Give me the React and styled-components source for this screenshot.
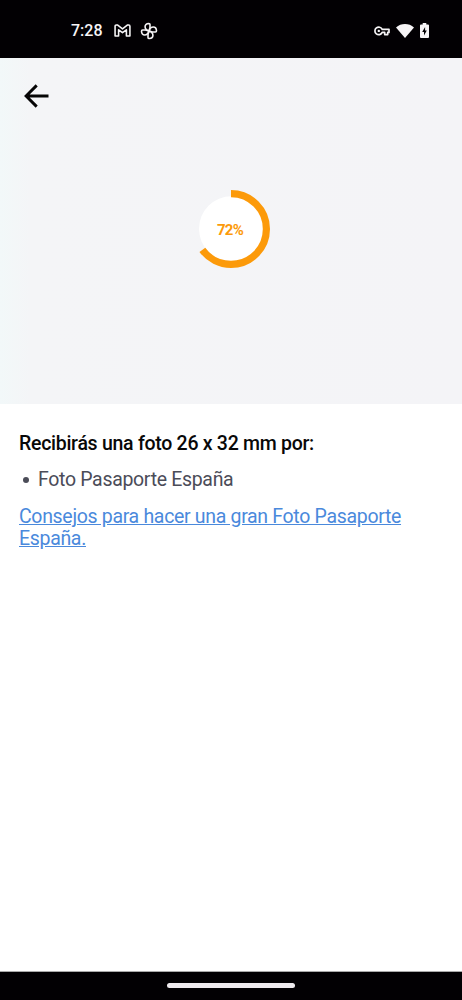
import React from "react";
import styled, { createGlobalStyle } from "styled-components";

const GlobalStyle = createGlobalStyle`
  body {
    margin: 0;
    background: #fff;
    font-family: Roboto, "Liberation Sans", sans-serif;
  }
`;

const Screen = styled.div`
  display: flex;
  flex-direction: column;
  width: 462px;
  height: 1000px;
  overflow: hidden;
`;

const StatusBar = styled.header`
  display: flex;
  justify-content: space-between;
  box-sizing: border-box;
  height: 58px;
  padding: 3px 33px 0 71px;
  background: #020003;
  color: #f6f4f6;
`;

const StatusGroup = styled.div`
  display: flex;
  align-items: center;
  gap: ${({ $gap }) => $gap}px;
`;

const Clock = styled.span`
  width: 32px;
  margin-right: 2px;
  font-size: 16px;
  font-weight: 500;
  white-space: nowrap;
`;

const Preview = styled.section`
  display: flex;
  flex-direction: column;
  align-items: center;
  height: 346px;
  background: linear-gradient(90deg, #f2f8f9 0, #f4f5f7 30px, #f4f4f7 100%);
`;

const BackButton = styled.button`
  display: flex;
  align-self: flex-start;
  margin: 26px 0 0 24px;
  padding: 0;
  border: 0;
  background: none;
  color: #050505;
`;

const Progress = styled.div`
  display: grid;
  place-items: center;
  margin-top: 82px;

  > * {
    grid-area: 1 / 1;
  }
`;

const Percent = styled.span`
  margin: 2px 2px 0 0;
  color: #fc9a0a;
  font-size: 15px;
  font-weight: 700;
  letter-spacing: -0.7px;
`;

const Details = styled.main`
  flex: 1;
  padding: 29px 19px 0;
  font-size: 19.5px;
  line-height: 22px;
  letter-spacing: -0.32px;
`;

const Heading = styled.h1`
  margin: 0;
  color: #080808;
  font-size: 19.5px;
  font-weight: 500;
  letter-spacing: -0.28px;
`;

const PhotoList = styled.ul`
  margin: 14px 0 15px;
  padding: 0;
  list-style: none;
`;

const PhotoItem = styled.li`
  display: flex;
  align-items: center;
  color: #4b4c58;

  &::before {
    content: "";
    width: 6px;
    height: 6px;
    margin: 0 9px 0 4px;
    border-radius: 50%;
    background: currentColor;
  }
`;

const TipsLink = styled.a`
  display: block;
  color: #4a89dc;
  text-decoration: underline;
`;

const NavigationBar = styled.footer`
  display: flex;
  justify-content: center;
  box-sizing: border-box;
  height: 29px;
  padding-top: 11px;
  border-top: 1px solid #a9a9a9;
  background: #020003;
`;

const HomeHandle = styled.div`
  width: 128px;
  height: 5px;
  border-radius: 3px;
  background: #eeeaee;
`;

const MailIcon = () => (
  <svg width="17" height="13" viewBox="0 0 18 14" fill="none" stroke="currentColor" strokeWidth="1.7" strokeLinejoin="round">
    <path d="M1 2.3Q1 1 2.3 1H3.5L9 5.2 14.5 1h1.2Q17 1 17 2.3V13h-3.8V6.2L9 9.4 4.8 6.2V13H1Z" />
  </svg>
);

const PinwheelIcon = () => (
  <svg width="18" height="18" viewBox="0 0 18 18" fill="none" stroke="currentColor" strokeWidth="1.6" strokeLinejoin="round">
    {[0, 90, 180, 270].map((angle) => (
      <path
        key={angle}
        d="M9 9 10 5.5V2.6Q10 1.5 8.8 1.5C3.8 1.8 3.8 7.4 9 9"
        transform={`rotate(${angle} 9 9)`}
      />
    ))}
  </svg>
);

const KeyIcon = () => (
  <svg width="16" height="10" viewBox="0 0 16 10" fill="none" stroke="currentColor" strokeWidth="1.7" strokeLinejoin="round">
    <path d="M8.2 3.4H15v3h-1.3v2.2h-3V6.4H8.2a3.8 3.8 0 1 1 0-3Z" />
    <circle cx="4.8" cy="4.9" r="1.2" fill="currentColor" stroke="none" />
  </svg>
);

const WifiIcon = () => (
  <svg width="18" height="14" viewBox="0 0 18 14" fill="currentColor">
    <path d="M0 3.5C5-1.1 13-1.1 18 3.5L9 14Z" />
  </svg>
);

const BatteryIcon = () => (
  <svg width="9" height="15" viewBox="0 0 9 15">
    <path d="M2.7 0h3.6v1.5H8q1 0 1 1V14q0 1-1 1H1q-1 0-1-1V2.5q0-1 1-1h1.7Z" fill="currentColor" />
    <path d="M5.1 4 2.2 9H4v3.5L6.8 7.6H5.1Z" fill="#020003" />
  </svg>
);

const BackIcon = () => (
  <svg width="25" height="24" viewBox="0 0 25 24" fill="none" stroke="currentColor" strokeWidth="2.9">
    <path d="M24.5 12H3M12.7 1.4 2.1 12l10.6 10.6" />
  </svg>
);

const ProgressRing = ({ filled }) => (
  <svg width="78" height="78" viewBox="0 0 78 78">
    <circle cx="39.5" cy="38.8" r="32.5" fill="#fff" />
    <circle
      cx="39"
      cy="39"
      r="35.4"
      fill="none"
      stroke="#fc9a0a"
      strokeWidth="7.2"
      pathLength="100"
      strokeDasharray={`${filled} 100`}
      transform="rotate(-90 39 39)"
    />
  </svg>
);

const App = () => {
  return (
    <Screen>
      <GlobalStyle />
      <StatusBar>
        <StatusGroup $gap={9}>
          <Clock>7:28</Clock>
          <MailIcon />
          <PinwheelIcon />
        </StatusGroup>
        <StatusGroup $gap={6}>
          <KeyIcon />
          <WifiIcon />
          <BatteryIcon />
        </StatusGroup>
      </StatusBar>
      <Preview>
        <BackButton aria-label="Volver">
          <BackIcon />
        </BackButton>
        <Progress>
          <ProgressRing filled={65} />
          <Percent>72%</Percent>
        </Progress>
      </Preview>
      <Details>
        <Heading>Recibirás una foto 26 x 32 mm por:</Heading>
        <PhotoList>
          <PhotoItem>Foto Pasaporte España</PhotoItem>
        </PhotoList>
        <TipsLink>Consejos para hacer una gran Foto Pasaporte España.</TipsLink>
      </Details>
      <NavigationBar>
        <HomeHandle />
      </NavigationBar>
    </Screen>
  );
};

export default App;
